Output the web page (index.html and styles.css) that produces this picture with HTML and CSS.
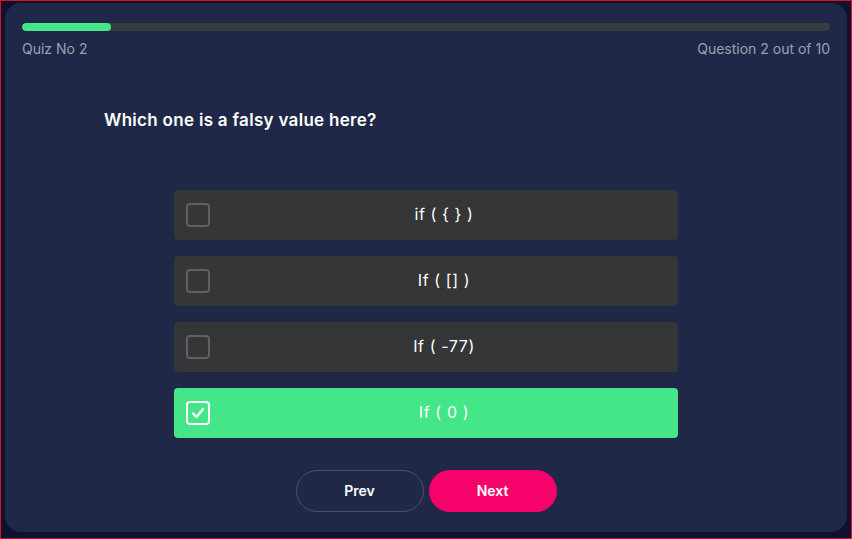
FILE: index.html
```html
<!DOCTYPE html>
<html>
<head>
<meta charset="utf-8">
<link rel="stylesheet" href="styles.css">
</head>
<body>
<div class="frame">
  <div class="card">
    <div class="progress"><div class="fill" style="width: 11%"></div></div>
    <div class="meta">
      <span>Quiz No 2</span>
      <span>Question 2 out of 10</span>
    </div>
    <h1 class="question">Which one is a falsy value here?</h1>
    <div class="options">
      <div class="option">
        <span class="box"></span>
        <span class="label">if ( { } )</span>
      </div>
      <div class="option">
        <span class="box"></span>
        <span class="label">If ( [] )</span>
      </div>
      <div class="option">
        <span class="box"></span>
        <span class="label">If ( -77)</span>
      </div>
      <div class="option selected">
        <span class="box"><svg width="14" height="12" viewBox="0 0 14 12"><path d="M2 6.5 L5.5 10 L12 2" fill="none" stroke="#fff" stroke-width="2.4" stroke-linecap="round" stroke-linejoin="round"/></svg></span>
        <span class="label">If ( 0 )</span>
      </div>
    </div>
    <div class="nav">
      <button class="btn prev">Prev</button>
      <button class="btn next">Next</button>
    </div>
  </div>
</div>
</body>
</html>
```
FILE: styles.css
```css
* { box-sizing: border-box; }
html, body { margin: 0; padding: 0; }
body {
  width: 852px;
  height: 539px;
  font-family: "Inter", "Noto Sans", sans-serif;
  background: #0e1230;
}
.frame {
  width: 852px;
  height: 539px;
  border: 1px solid #e0101c;
  padding: 2px 4px 6px 4px;
  background: #0e1230;
}
.card {
  height: 100%;
  background: #1f2947;
  border-radius: 16px;
  padding: 20px 17px 0 17px;
  display: flex;
  flex-direction: column;
}
.progress {
  height: 8px;
  background: #373c42;
  border-radius: 4px;
  overflow: hidden;
}
.fill {
  height: 100%;
  background: #45e68a;
  border-radius: 4px;
}
.meta {
  display: flex;
  justify-content: space-between;
  margin-top: 9px;
  font-size: 14px;
  color: #9aa0b0;
  line-height: 18px;
}
.question {
  margin: 51px 0 0 82px;
  font-size: 17px;
  font-weight: 600;
  letter-spacing: 0.3px;
  color: #ffffff;
  line-height: 22px;
}
.options {
  margin: 59px auto 0 auto;
  width: 504px;
  display: flex;
  flex-direction: column;
  gap: 16px;
}
.option {
  height: 50px;
  background: #343638;
  border-radius: 4px;
  display: flex;
  align-items: center;
  padding-left: 12px;
}
.box {
  width: 24px;
  height: 24px;
  border: 2px solid #5d6064;
  border-radius: 4px;
  display: flex;
  align-items: center;
  justify-content: center;
  flex: none;
}
.label {
  flex: 1;
  text-align: center;
  color: #ffffff;
  font-size: 16px;
  letter-spacing: 0.6px;
  padding-bottom: 3px;
}
.option.selected { background: #45e68a; }
.option.selected .box { border-color: #ffffff; }
.nav {
  margin-top: 32px;
  display: flex;
  justify-content: center;
  gap: 5px;
}
.btn {
  width: 128px;
  height: 42px;
  border-radius: 21px;
  font-family: inherit;
  font-size: 14px;
  font-weight: 600;
  color: #ffffff;
  cursor: pointer;
  padding-bottom: 2px;
}
.prev {
  background: transparent;
  border: 1px solid #4a5169;
}
.next {
  background: #f5036a;
  border: none;
}
```
